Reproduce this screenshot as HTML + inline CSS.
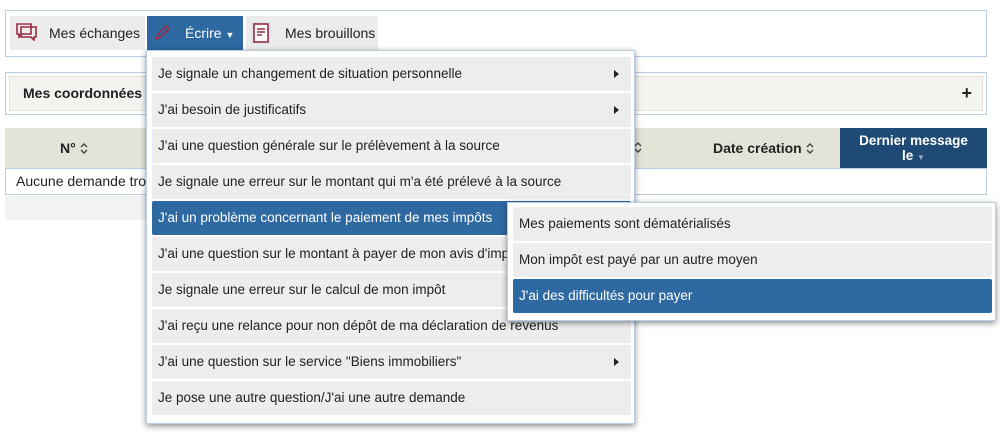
<!DOCTYPE html>
<html><head><meta charset="utf-8"><style>
*{box-sizing:border-box}
body{margin:0;width:1000px;height:435px;background:#fff;font-family:"Liberation Sans",Arial,sans-serif;font-size:14px;color:#222;position:relative;overflow:hidden}
.abs{position:absolute}
.nav{left:5px;top:10px;width:982px;height:47px;border:1px solid #b9cde4}
.btn{top:16px;height:34px;background:#ececec;line-height:34px;font-size:14px}
.coord{left:5px;top:72px;width:982px;height:43px;border:1px solid #b9cde4}
.coordin{left:9px;top:76px;width:974px;height:35px;background:#f3f3f0;border:1px solid #e2e2da;font-weight:bold;line-height:33px;padding-left:13px}
.th{left:5px;top:128px;width:982px;height:40px;background:#e4e3d8}
.row{left:5px;top:168px;width:982px;height:27px;border:1px solid #b9cde4;line-height:25px;padding-left:10px}
.menu{left:146px;top:50px;width:489px;height:374px;background:#fff;border:1px solid #b9cde4;box-shadow:0 2px 6px rgba(0,0,0,.45)}
.it{position:absolute;left:5px;width:479px;height:34px;background:#ededed;line-height:34px;padding-left:6px;font-size:13.5px;border-radius:2px}
.sel{background:#2e69a2;color:#fff}
.arr{position:absolute;right:12px;top:13px;width:0;height:0;border-left:5px solid #222;border-top:4px solid transparent;border-bottom:4px solid transparent}
.sub{left:507px;top:202px;width:489px;height:119px;background:#fff;border:1px solid #b9cde4;box-shadow:0 2px 6px rgba(0,0,0,.45)}
.srt{display:inline-block;vertical-align:-1px;margin-left:4px}
</style></head><body>
<div class="abs nav"></div>
<div class="abs btn" style="left:10px;width:135px;padding-left:39px">Mes échanges</div>
<svg class="abs" style="left:16px;top:23px" width="22" height="18" viewBox="0 0 22 18"><path d="M1 1h14v10H6l-3 3v-3H1z M5 4h15v10h-2v3l-3-3H5z" fill="none" stroke="#9b2c3f" stroke-width="1.6"/></svg>
<div class="abs btn" style="left:147px;width:96px;background:#2e69a2;color:#fff;padding-left:38px">Écrire <span style="font-size:9px">▼</span></div>
<svg class="abs" style="left:153px;top:24px" width="18" height="18" viewBox="0 0 18 18"><path d="M3 15l2-5 8-8 3 3-8 8z" fill="none" stroke="#a3283c" stroke-width="1.5"/></svg>
<div class="abs btn" style="left:246px;width:132px;padding-left:39px">Mes brouillons</div>
<svg class="abs" style="left:251px;top:22px" width="20" height="22" viewBox="0 0 20 22"><rect x="0" y="0" width="20" height="22" fill="#dfe3ef"/><rect x="3" y="2" width="14" height="18" fill="#fff" stroke="#9b2c3f" stroke-width="1.6"/><path d="M6 7h8M6 10h8M6 13h5" stroke="#9b2c3f" stroke-width="1.4"/></svg>
<div class="abs coord"></div>
<div class="abs coordin">Mes coordonnées<span style="position:absolute;right:10px;font-size:18px">+</span></div>
<div class="abs th"></div>
<div class="abs" style="left:60px;top:140px;font-weight:bold">N°<svg class="srt" width="8" height="11" viewBox="0 0 8 11"><path d="M1 4l3-3 3 3M1 7l3 3 3-3" fill="none" stroke="#444" stroke-width="1.4"/></svg></div>
<svg class="abs" style="left:634px;top:142px" width="8" height="11" viewBox="0 0 8 11"><path d="M1 4l3-3 3 3M1 7l3 3 3-3" fill="none" stroke="#444" stroke-width="1.4"/></svg>
<div class="abs" style="left:713px;top:140px;font-weight:bold">Date création<svg class="srt" width="8" height="11" viewBox="0 0 8 11"><path d="M1 4l3-3 3 3M1 7l3 3 3-3" fill="none" stroke="#444" stroke-width="1.4"/></svg></div>
<div class="abs" style="left:840px;top:128px;width:147px;height:40px;background:#1e4a75;color:#fff;font-weight:bold;text-align:center;font-size:13.5px;line-height:15px;padding-top:5px">Dernier message<br>le <span style="font-size:8px;color:#aab">▼</span></div>
<div class="abs row">Aucune demande trouvée</div>
<div class="abs" style="left:5px;top:196px;width:145px;height:24px;background:#f3f3f3"></div>
<div class="abs menu">
<div class="it" style="top:6px">Je signale un changement de situation personnelle<span class="arr"></span></div>
<div class="it" style="top:42px">J'ai besoin de justificatifs<span class="arr"></span></div>
<div class="it" style="top:78px">J'ai une question générale sur le prélèvement à la source</div>
<div class="it" style="top:114px">Je signale une erreur sur le montant qui m'a été prélevé à la source</div>
<div class="it sel" style="top:150px">J'ai un problème concernant le paiement de mes impôts</div>
<div class="it" style="top:186px">J'ai une question sur le montant à payer de mon avis d'impôt</div>
<div class="it" style="top:222px">Je signale une erreur sur le calcul de mon impôt</div>
<div class="it" style="top:258px">J'ai reçu une relance pour non dépôt de ma déclaration de revenus</div>
<div class="it" style="top:294px">J'ai une question sur le service "Biens immobiliers"<span class="arr"></span></div>
<div class="it" style="top:330px">Je pose une autre question/J'ai une autre demande</div>
</div>
<div class="abs sub">
<div class="it" style="top:4px">Mes paiements sont dématérialisés</div>
<div class="it" style="top:40px">Mon impôt est payé par un autre moyen</div>
<div class="it sel" style="top:76px">J'ai des difficultés pour payer</div>
</div>
</body></html>
